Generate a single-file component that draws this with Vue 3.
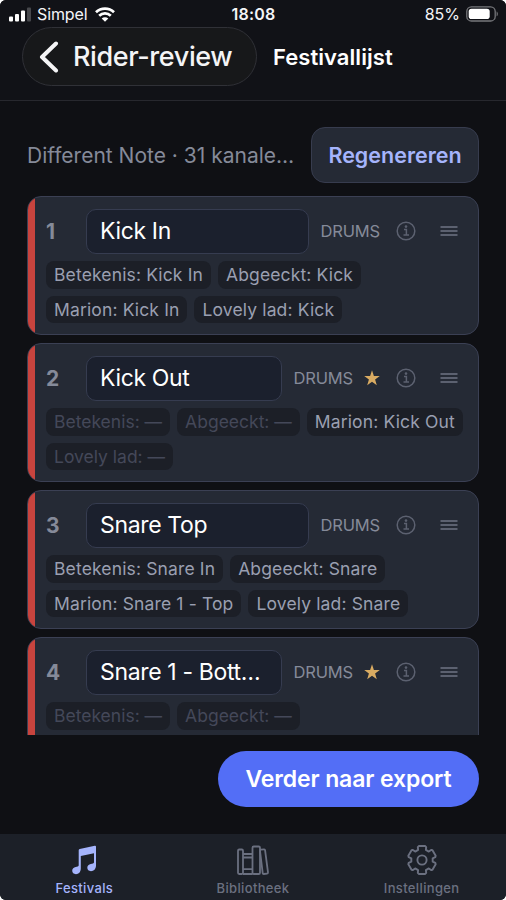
<script setup>
const channels = [
  {
    id: 1, name: 'Kick In', group: 'DRUMS', starred: false,
    tags: [['Betekenis', 'Kick In'], ['Abgeeckt', 'Kick'], ['Marion', 'Kick In'], ['Lovely lad', 'Kick']]
  },
  {
    id: 2, name: 'Kick Out', group: 'DRUMS', starred: true,
    tags: [['Betekenis', ''], ['Abgeeckt', ''], ['Marion', 'Kick Out'], ['Lovely lad', '']]
  },
  {
    id: 3, name: 'Snare Top', group: 'DRUMS', starred: false,
    tags: [['Betekenis', 'Snare In'], ['Abgeeckt', 'Snare'], ['Marion', 'Snare 1 - Top'], ['Lovely lad', 'Snare']]
  },
  {
    id: 4, name: 'Snare 1 - Bott…', group: 'DRUMS', starred: true,
    tags: [['Betekenis', ''], ['Abgeeckt', '']]
  }
]

// Six-toothed outline: each tooth is a pair of outer corners between two valley corners.
const gearPoints = []
for (let tooth = 0; tooth < 6; tooth++) {
  for (const [radius, offset] of [[10.8, -21], [13.6, -18], [14.3, -13], [14.3, 13], [13.6, 18], [10.8, 21]]) {
    const angle = ((tooth * 60 + offset) * Math.PI) / 180
    gearPoints.push(`${(16 + radius * Math.sin(angle)).toFixed(2)},${(16 - radius * Math.cos(angle)).toFixed(2)}`)
  }
}
const gear = gearPoints.join(' ')
</script>

<template>
  <div class="device">
    <div class="screen">
      <header class="header">
        <div class="status">
          <div class="carrier">
            <svg class="signal" width="22" height="15" viewBox="0 0 22 15">
              <rect x="0" y="9.5" width="4" height="5" rx="1" fill="#fff" />
              <rect x="6" y="7" width="4" height="7.5" rx="1" fill="#fff" />
              <rect x="12" y="3.5" width="4" height="11" rx="1" fill="#fff" />
              <rect x="18" y="0.5" width="4" height="14" rx="1" fill="#47484c" />
            </svg>
            <span class="carrier-name">Simpel</span>
            <svg class="wifi" width="20" height="15" viewBox="0 0 20 15" fill="none" stroke="#fff" stroke-width="2.7">
              <path d="M1 5.2C6 0.3 14 0.3 19 5.2" />
              <path d="M4.2 8.7C7.5 5.5 12.5 5.5 15.8 8.7" />
              <path d="M10 14.7L6.7 11.5C8.5 9.8 11.5 9.8 13.3 11.5Z" fill="#fff" stroke="none" />
            </svg>
          </div>
          <span class="clock">18:08</span>
          <div class="power">
            <span class="percent">85%</span>
            <svg width="32" height="16" viewBox="0 0 32 16">
              <rect x="0.8" y="0.8" width="28.4" height="14.2" rx="4.6" fill="none" stroke="#77787c" stroke-width="1.3" />
              <rect x="2.7" y="2.7" width="21" height="10.4" rx="2.8" fill="#fff" />
              <path d="M30.6 5.6C32.2 6.2 32.2 9.6 30.6 10.2Z" fill="#77787c" />
            </svg>
          </div>
        </div>
        <div class="nav">
          <button class="back">
            <svg width="20" height="32" viewBox="0 0 20 32" fill="none" stroke="#f4f4f6" stroke-width="4" stroke-linecap="round" stroke-linejoin="round">
              <path d="M17 2.5L3 16L17 29.5" />
            </svg>
            <span class="back-text">Rider-review</span>
          </button>
          <h1 class="title">Festivallijst</h1>
        </div>
      </header>

      <main class="content">
        <div class="toolbar">
          <span class="summary">Different Note · 31 kanale…</span>
          <button class="regenerate"><span>Regenereren</span></button>
        </div>
        <div class="list">
          <article v-for="c in channels" :key="c.id" class="card">
            <div class="stripe"></div>
            <div class="body">
              <div class="row">
                <span class="number">{{ c.id }}</span>
                <div class="name">{{ c.name }}</div>
                <span class="group">{{ c.group }}</span>
                <svg v-if="c.starred" class="star" width="16" height="16" viewBox="0 0 16 16">
                  <path d="M8 0.3L9.9 5.9H15.8L11.1 9.4L12.8 15.2L8 11.7L3.2 15.2L4.9 9.4L0.2 5.9H6.1Z" fill="#d9ab62" />
                </svg>
                <svg class="info" width="20" height="20" viewBox="0 0 20 20" fill="none" stroke="#5c6170">
                  <circle cx="10" cy="10" r="8.8" stroke-width="1.5" />
                  <path d="M8 8.4H10.4V14.3M7.5 14.1H13" stroke-width="1.5" />
                  <circle cx="10" cy="5.6" r="1.3" fill="#5c6170" stroke="none" />
                </svg>
                <svg class="handle" width="18" height="12" viewBox="0 0 18 12" stroke="#5c6170" stroke-width="2">
                  <path d="M0.5 2H17.5M0.5 6H17.5M0.5 10H17.5" />
                </svg>
              </div>
              <div class="tags">
                <span v-for="t in c.tags" :key="t[0]" class="tag" :class="{ empty: !t[1] }">{{ t[0] }}: {{ t[1] || '—' }}</span>
              </div>
            </div>
          </article>
        </div>
        <div class="actions">
          <button class="export"><span>Verder naar export</span></button>
        </div>
      </main>

      <nav class="tabs">
        <div class="tab active">
          <svg width="32" height="32" viewBox="0 0 32 32" fill="#a5b4fc">
            <path d="M10.7 6.2Q10.7 5.2 11.7 4.9L26.800 1.700Q28 1.500 28 2.700V21.500C28 25 25.800 27.200 23 27.200C20.600 27.200 19.300 25.600 19.300 23.800C19.300 21.700 20.800 20.400 22.800 20L25 19.500Q26 19.200 26 18.200V9.200L12.800 12V24.500C12.800 28 10.700 30.200 8 30.200C5.600 30.200 4.200 28.600 4.200 26.800C4.200 24.700 5.700 23.400 7.700 23L9.700 22.500Q10.700 22.200 10.700 21.200Z" />
          </svg>
          <span>Festivals</span>
        </div>
        <div class="tab">
          <svg width="34" height="32" viewBox="0 0 34 32" fill="none" stroke="#6b7080" stroke-width="1.8" stroke-linejoin="round">
            <rect x="2" y="5.500" width="5" height="24.500" rx="1.200" />
            <path d="M7 10H16.500M7 13.500H16.500M7 25.200H16.500M7 30H16.500" />
            <rect x="16.500" y="2.500" width="7.500" height="27.500" rx="1.300" />
            <path d="M24 6.800Q24 5.800 25 5.700L28 5.400Q29 5.300 29.100 6.300L32 28.400Q32.100 29.500 31.100 29.600L27.800 30Q26.800 30.100 26.700 29.100L24 6.800Z" />
          </svg>
          <span>Bibliotheek</span>
        </div>
        <div class="tab">
          <svg width="32" height="32" viewBox="0 0 32 32" fill="none" stroke="#6b7080" stroke-width="1.9" stroke-linejoin="round">
            <polygon :points="gear" />
            <circle cx="16" cy="16" r="4.600" />
          </svg>
          <span>Instellingen</span>
        </div>
      </nav>
    </div>
  </div>
</template>

<style>
body {
  margin: 0;
  background: #fff;
}
</style>

<style scoped>
.device {
  width: 506px;
  height: 900px;
  font-family: Inter, "Liberation Sans", sans-serif;
  overflow: hidden;
}
.device * {
  box-sizing: border-box;
}
.screen {
  display: flex;
  flex-direction: column;
  height: 900px;
  border-radius: 6px;
  overflow: hidden;
  background: #0f1014;
}
button {
  font: inherit;
  margin: 0;
  padding: 0;
  border: 0;
  background: none;
  color: inherit;
}
span,
.name,
h1 {
  white-space: nowrap;
}
.header {
  height: 101px;
  flex: none;
  background: #111217;
  border-bottom: 1px solid #27282e;
}
.status {
  display: grid;
  grid-template-columns: 1fr auto 1fr;
  align-items: center;
  height: 28px;
  padding: 0 8px 0 9px;
  color: #f5f5f7;
  font-size: 16px;
}
.carrier,
.power {
  display: flex;
  align-items: center;
}
.carrier-name {
  margin: 0 7px 0 6px;
  letter-spacing: -0.1px;
}
.power {
  justify-content: flex-end;
  gap: 6px;
}
.clock {
  font-weight: 600;
  letter-spacing: 0.200px;
}
.nav {
  display: flex;
  align-items: center;
}
.back {
  display: flex;
  align-items: center;
  width: 235px;
  height: 59px;
  margin: -1px 16px 0 22px;
  padding-left: 16px;
  gap: 14px;
  border: 1px solid #303137;
  border-radius: 30px;
  background: #17181a;
  color: #f4f4f6;
}
.back-text {
  font-size: 27px;
  font-weight: 500;
  letter-spacing: -0.400px;
}
.title {
  margin: 0;
  font-size: 22px;
  font-weight: 600;
  letter-spacing: 0.050px;
  color: #fff;
}
.content {
  flex: 1;
  min-height: 0;
  padding: 26px 27px 0;
  display: flex;
  flex-direction: column;
}
.toolbar {
  display: flex;
  align-items: center;
  justify-content: space-between;
  height: 56px;
  flex: none;
}
.summary {
  font-size: 21px;
  color: #858a99;
}
.regenerate {
  width: 168px;
  height: 56px;
  border: 1.500px solid #373c4e;
  border-radius: 14px;
  background: #252a35;
  color: #a5b4fc;
  font-size: 21.500px;
  font-weight: 600;
}
.list {
  display: flex;
  flex-direction: column;
  gap: 8px;
  height: 539px;
  margin-top: 13px;
  flex: none;
  overflow: hidden;
}
.card {
  display: flex;
  flex: none;
  height: 139px;
  border: 1.500px solid #3b4054;
  border-radius: 14px;
  background: #252a35;
  overflow: hidden;
}
.stripe {
  width: 7px;
  flex: none;
  background: #c8443e;
}
.body {
  flex: 1;
  min-width: 0;
  padding: 11.500px 0 0 11px;
}
.row {
  display: flex;
  align-items: center;
  height: 45px;
  padding-right: 20px;
}
.number {
  width: 40px;
  flex: none;
  font-size: 21px;
  font-weight: 700;
  color: #858a99;
}
.name {
  flex: 1;
  min-width: 0;
  height: 45px;
  padding-left: 13px;
  line-height: 43px;
  border: 1.500px solid #363c50;
  border-radius: 10px;
  background: #1b202d;
  color: #fff;
  font-size: 23px;
  letter-spacing: -0.350px;
  overflow: hidden;
}
.group {
  margin-left: 11.500px;
  font-size: 16.500px;
  letter-spacing: -0.150px;
  color: #858a99;
}
.star {
  margin-left: 11px;
}
.info {
  margin-left: 15.500px;
}
.handle {
  margin-left: 24.500px;
}
.tags {
  display: flex;
  flex-wrap: wrap;
  gap: 7px;
  margin-top: 7.500px;
}
.tag {
  height: 27.500px;
  padding: 0 8px;
  line-height: 27.500px;
  border-radius: 8px;
  background: #1c1f27;
  color: #9a9fb1;
  font-size: 17.500px;
  letter-spacing: 0.140px;
}
.tag.empty {
  color: #444859;
  letter-spacing: 0;
}
.actions {
  display: flex;
  justify-content: flex-end;
  margin-top: 16px;
}
.export {
  width: 261px;
  height: 56px;
  border-radius: 28px;
  background: #536ef6;
  color: #fff;
  font-size: 23px;
  font-weight: 600;
  letter-spacing: -0.120px;
}
.tabs {
  display: grid;
  grid-template-columns: repeat(3, 1fr);
  height: 66px;
  flex: none;
  background: #1c2028;
}
.tab {
  display: flex;
  flex-direction: column;
  align-items: center;
  padding-top: 10px;
  color: #6b7080;
  font-size: 13px;
  font-weight: 500;
  line-height: 16px;
}
.tab span {
  margin-top: 4px;
  letter-spacing: 0.360px;
}
.tab.active {
  color: #a5b4fc;
}
</style>
